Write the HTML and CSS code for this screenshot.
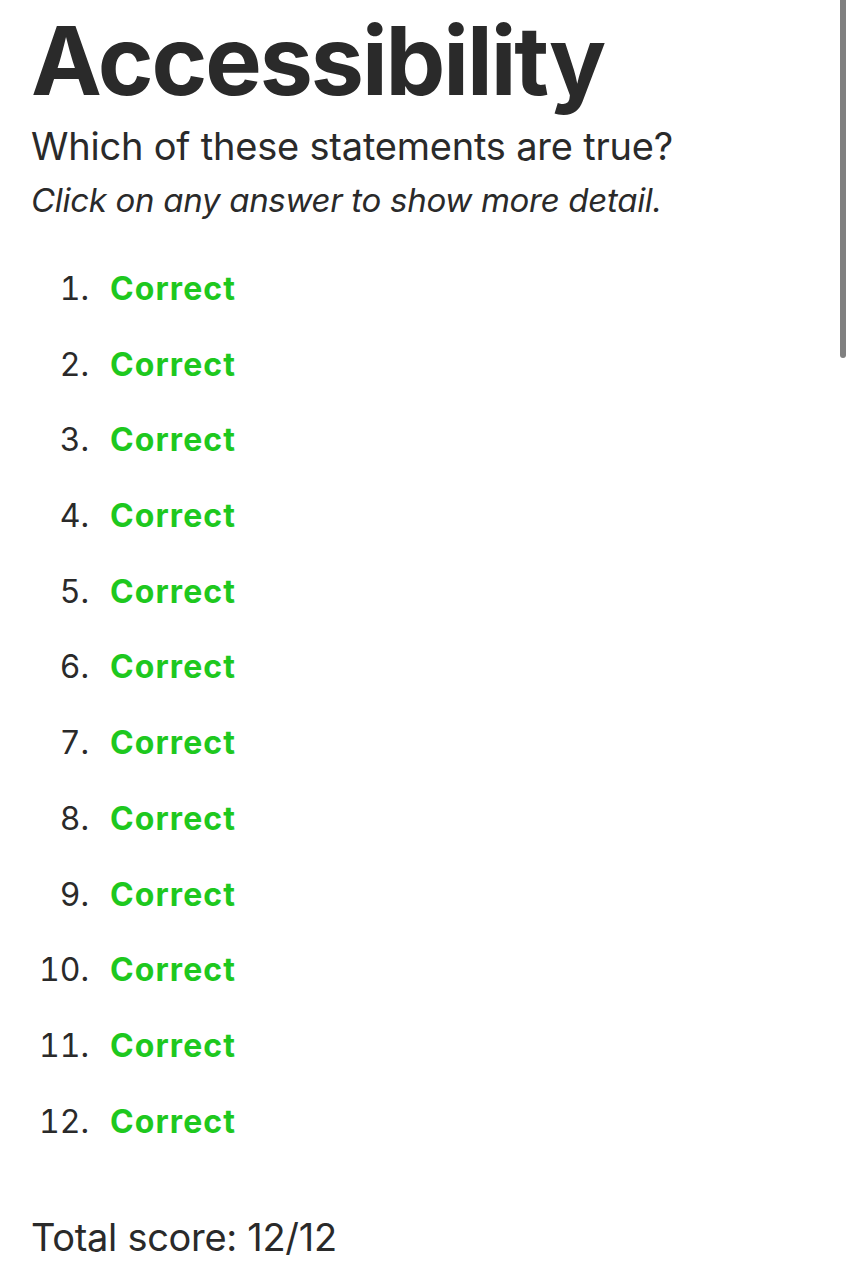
FILE: index.html
```html
<!DOCTYPE html>
<html lang="en">
<head>
<meta charset="utf-8">
<title>Accessibility</title>
<link rel="stylesheet" href="styles.css">
</head>
<body>
<main class="page">
  <h1 class="title">Accessibility</h1>
  <p class="question">Which of these statements are true?</p>
  <p class="hint">Click on any answer to show more detail.</p>
  <ol class="answers">
    <li class="answer"><span class="num">1.</span><span class="result">Correct</span></li>
    <li class="answer"><span class="num">2.</span><span class="result">Correct</span></li>
    <li class="answer"><span class="num">3.</span><span class="result">Correct</span></li>
    <li class="answer"><span class="num">4.</span><span class="result">Correct</span></li>
    <li class="answer"><span class="num">5.</span><span class="result">Correct</span></li>
    <li class="answer"><span class="num">6.</span><span class="result">Correct</span></li>
    <li class="answer"><span class="num">7.</span><span class="result">Correct</span></li>
    <li class="answer"><span class="num">8.</span><span class="result">Correct</span></li>
    <li class="answer"><span class="num">9.</span><span class="result">Correct</span></li>
    <li class="answer"><span class="num">10.</span><span class="result">Correct</span></li>
    <li class="answer"><span class="num">11.</span><span class="result">Correct</span></li>
    <li class="answer"><span class="num">12.</span><span class="result">Correct</span></li>
  </ol>
  <p class="total">Total score: 12/12</p>
</main>
<div class="scrollbar"></div>
</body>
</html>
```

FILE: styles.css
```css
html, body {
  margin: 0;
  padding: 0;
  background: #ffffff;
}
body {
  font-family: Inter, "Noto Sans", "Liberation Sans", sans-serif;
  color: #2a2a2a;
  overflow: hidden;
}
.page {
  padding: 13px 0 0 31px;
}
.title {
  margin: 0;
  font-size: 95px;
  line-height: 96px;
  font-weight: 700;
  letter-spacing: -2.1px;
}
.question {
  margin: 14px 0 0;
  font-size: 38px;
  line-height: 46px;
  letter-spacing: -0.2px;
}
.hint {
  margin: 11px 0 0;
  font-size: 33px;
  line-height: 40px;
  font-style: italic;
  letter-spacing: -0.3px;
}
.answers {
  list-style: none;
  margin: 31px 0 0;
  padding: 0;
}
.answer {
  display: flex;
  align-items: baseline;
  height: 75.7px;
  line-height: 75.7px;
  font-size: 32px;
}
.num {
  width: 58px;
  text-align: right;
  font-weight: 400;
  font-feature-settings: "tnum" 1;
}
.result {
  margin-left: 21px;
  font-weight: 700;
  color: #1ec81e;
  letter-spacing: 1.1px;
}
.total {
  margin: 55px 0 0;
  font-size: 38px;
  line-height: 46px;
  letter-spacing: -0.3px;
}
.scrollbar {
  position: fixed;
  top: 0;
  right: 6px;
  width: 6px;
  height: 358px;
  border-radius: 0 0 3px 3px;
  background: #808080;
}
```
